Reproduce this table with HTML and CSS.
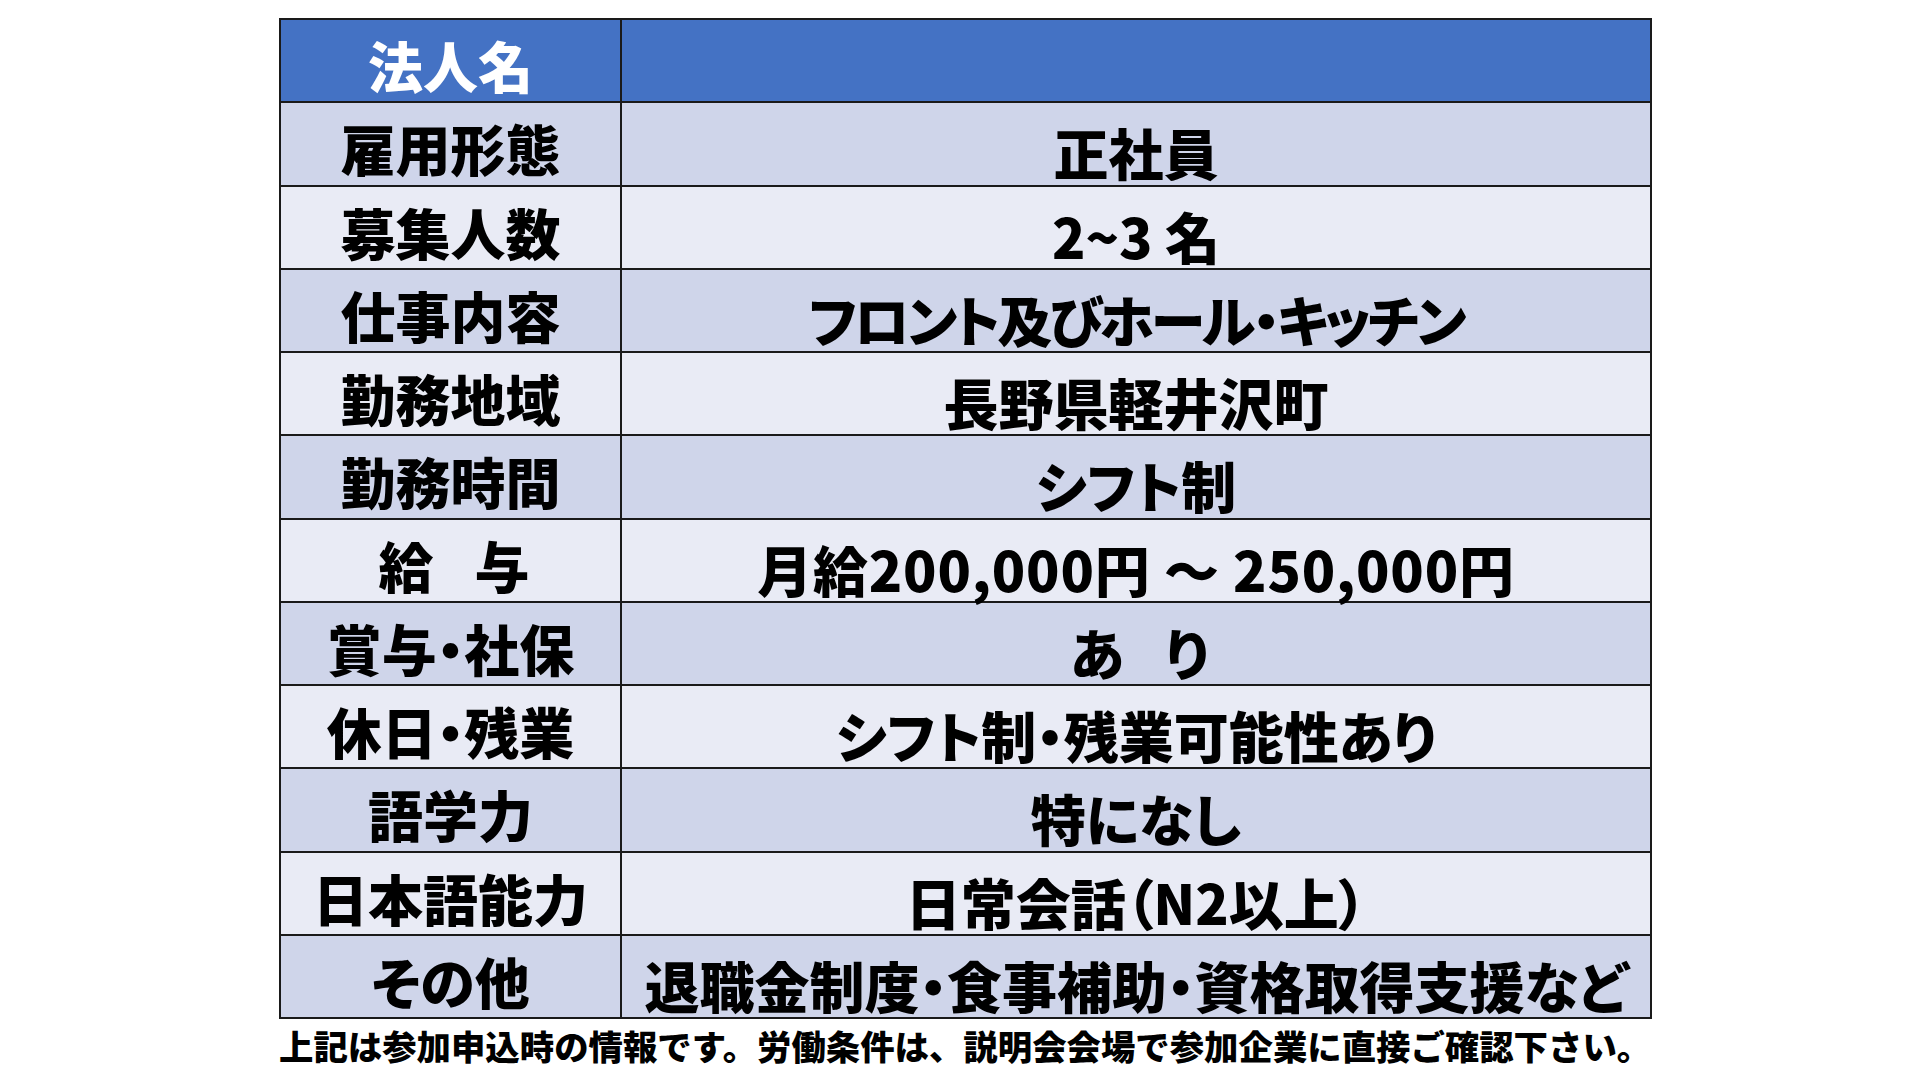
FILE: index.html
```html
<!DOCTYPE html>
<html lang="ja">
<head>
<meta charset="utf-8">
<title>募集要項</title>
<link rel="stylesheet" href="styles.css">
</head>
<body>
<main class="sheet">
  <table class="job">
    <colgroup><col class="c-label"><col class="c-value"></colgroup>
    <tr class="head"><th class="label">法人名</th><td class="value"></td></tr>
    <tr class="dark"><th class="label">雇用形態</th><td class="value">正社員</td></tr>
    <tr class="light"><th class="label">募集人数</th><td class="value">2~3 名</td></tr>
    <tr class="dark"><th class="label">仕事内容</th><td class="value tight">フロント及びホール・キッチン</td></tr>
    <tr class="light"><th class="label">勤務地域</th><td class="value">長野県軽井沢町</td></tr>
    <tr class="dark"><th class="label">勤務時間</th><td class="value">シフト制</td></tr>
    <tr class="light"><th class="label narrow">給　与</th><td class="value wide">月給200,000円 ～ 250,000円</td></tr>
    <tr class="dark"><th class="label">賞与・社保</th><td class="value narrow">あ　り</td></tr>
    <tr class="light"><th class="label">休日・残業</th><td class="value">シフト制・残業可能性あり</td></tr>
    <tr class="dark"><th class="label">語学力</th><td class="value">特になし</td></tr>
    <tr class="light"><th class="label">日本語能力</th><td class="value">日常会話（N2以上）</td></tr>
    <tr class="dark"><th class="label">その他</th><td class="value">退職金制度・食事補助・資格取得支援など</td></tr>
  </table>
  <p class="note">上記は参加申込時の情報です。労働条件は、説明会会場で参加企業に直接ご確認下さい。</p>
</main>
</body>
</html>
```
FILE: styles.css
```css
html, body {
  margin: 0;
  padding: 0;
  background: #ffffff;
}
body {
  width: 1920px;
  height: 1080px;
  overflow: hidden;
  font-family: "Noto Sans CJK JP", "Noto Sans", sans-serif;
  color: #000000;
}
.sheet {
  display: flex;
  flex-direction: column;
  align-items: flex-start;
  padding: 18px 0 0 279px;
}
.job {
  width: 1371px;
  table-layout: fixed;
  border-collapse: collapse;
  border: 2px solid #1a1a1a;
}
.c-label { width: 341px; }
.c-value { width: 1030px; }
.job tr { height: 83.25px; }
.job th, .job td {
  padding: 0;
  border: 2px solid #1a1a1a;
  text-align: center;
  vertical-align: middle;
  font-size: 55px;
  font-weight: 900;
  line-height: 55px;
  white-space: nowrap;
  font-feature-settings: "palt";
}
.job th { padding-top: 8px; }
.job td { padding-top: 16px; }
.job td.tight { letter-spacing: -3px; }
.job td.wide { letter-spacing: 0.8px; }
.job .narrow { letter-spacing: -7px; }
.head th, .head td { background: #4472c4; color: #ffffff; }
.dark th, .dark td { background: #cfd5ea; }
.light th, .light td { background: #e9ebf5; }
.note {
  margin: 6px 0 0 0;
  font-size: 34.4px;
  font-weight: 900;
  line-height: 1.2;
  white-space: nowrap;
}
```
